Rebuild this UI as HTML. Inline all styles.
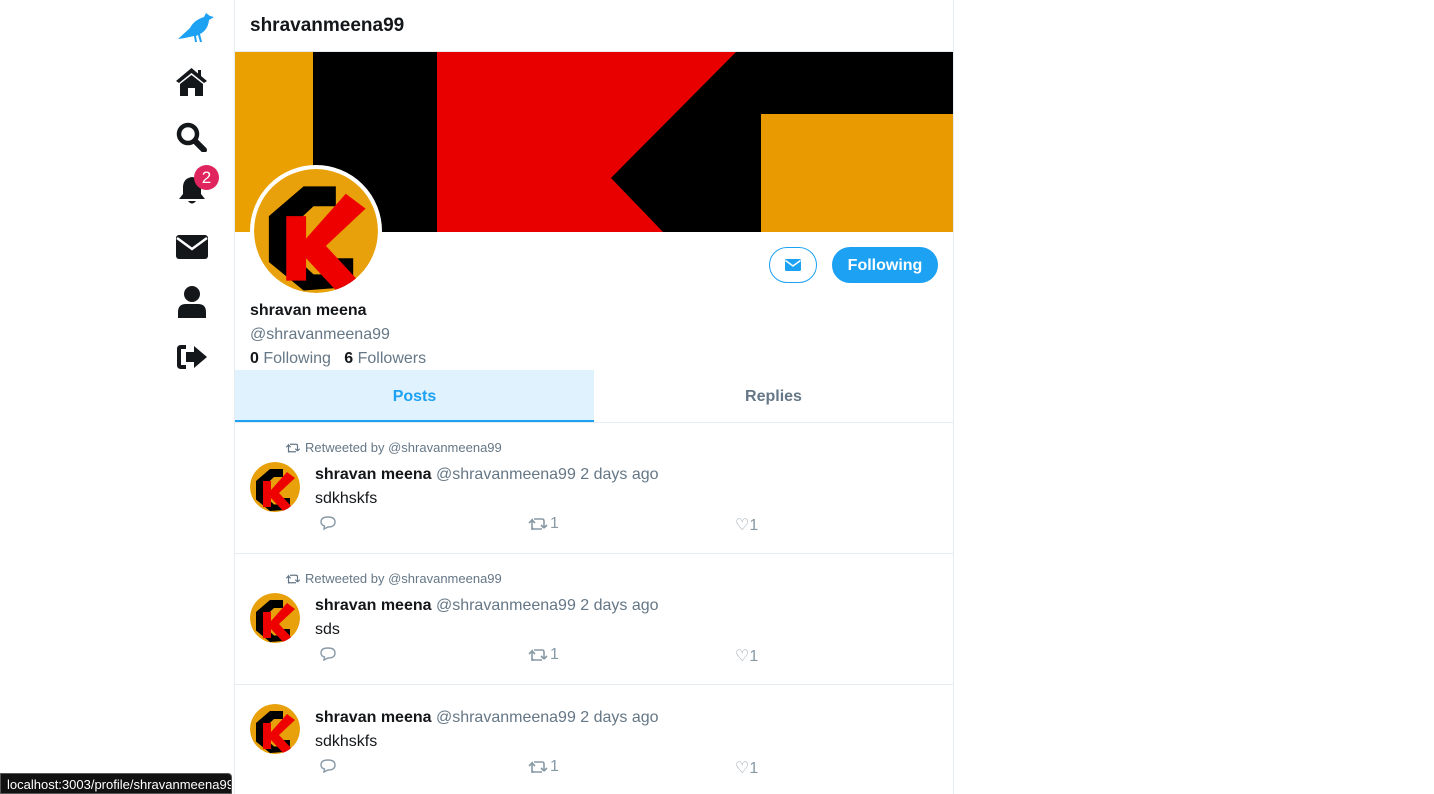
<!DOCTYPE html>
<html><head><meta charset="utf-8"><style>
*{box-sizing:border-box;margin:0;padding:0}
body{width:1434px;height:794px;overflow:hidden;background:#fff;font-family:"Liberation Sans",Arial,sans-serif;color:#14171a;position:relative}
.nav{position:absolute;left:160px;top:0;width:75px;height:794px}
.nav svg{position:absolute;left:16px}
.main{position:absolute;left:234px;top:0;width:720px;height:794px;border-left:1px solid #e6ecf0;border-right:1px solid #e6ecf0}
.hdr{height:52px;padding:15px 15px;font-weight:bold;font-size:19px;border-bottom:1px solid #e6ecf0}
.banner{position:absolute;left:0;top:52px;width:718px;height:180px}
.av{position:absolute;left:15px;top:165px;width:132px;height:132px;border-radius:50%;border:4px solid #fff;overflow:hidden;background:#fff}
.btn{position:absolute;top:247px;height:36px;border-radius:18px;border:1px solid #1da1f2}
.name{position:absolute;left:15px;top:302px;font-weight:bold;font-size:16px}
.handle{position:absolute;left:15px;top:326px;font-size:16px;color:#657786}
.fol{position:absolute;left:15px;top:350px;font-size:16px;color:#657786}
.fol b{color:#14171a}
.tabs{position:absolute;left:0;top:370px;width:718px;height:53px;border-bottom:1px solid #e6ecf0;display:flex}
.tab{flex:1;text-align:center;font-weight:bold;font-size:16px;line-height:53px;color:#657786}
.tab.on{background:#e0f2fd;color:#1da1f2;border-bottom:2px solid #1da1f2}
.post{position:absolute;left:0;width:718px;border-bottom:1px solid #e6ecf0}
.rt{position:absolute;left:50px;font-size:13px;color:#657786}
.pav{position:absolute;left:15px;width:50px;height:50px;border-radius:50%;overflow:hidden}
.pl{position:absolute;left:80px;font-size:16px;color:#657786;white-space:nowrap}
.pl b{color:#14171a}
.pt{position:absolute;left:80px;font-size:16px}
.act{position:absolute;font-size:16px;color:#8899a6;display:flex;align-items:center;gap:2px}
.status{position:absolute;left:0;top:773px;background:#111;color:#fff;font-size:13px;padding:3px 6px;height:21px;width:232px;border:1px solid #555;border-radius:0 4px 0 0;white-space:nowrap;overflow:hidden}
</style></head><body>
<svg width="0" height="0" style="position:absolute"><defs>
<symbol id="logo" viewBox="0 0 100 100"><circle cx="50" cy="50" r="50" fill="#e8a10a"/><polygon points="12,38 40,14 66,14 66,30 48,30 32,45 32,70 48,85 62,85 62,72 80,72 80,95 40,98 12,75" fill="#000"/><polygon points="26,38 42,38 42,56 74,20 90,32 58,62 84,90 68,100 42,72 42,90 26,90" fill="#e00"/></symbol>
<symbol id="rt" viewBox="0 0 20 16"><path d="M4 14 L4 4 L1 7 M4 4 L7 7 M4 4 L4 3 M6 3 L14 3 Q16 3 16 5 L16 12 M16 12 L13 9 M16 12 L19 9 M14 13 L6 13 Q4 13 4 11" stroke="currentColor" stroke-width="1.6" fill="none"/></symbol>
</defs></svg>
<div class="nav">
<svg style="top:12px" width="40" height="30" viewBox="0 0 40 30"><path d="M2 27 L14 16 Q18 8 28 5 L30 1 L34 4 L38 5 L33 8 Q32 18 24 22 L26 30 L24 30 L22 23 L20 24 L21 30 L19 30 L18 24 Q10 26 2 27Z" fill="#1da1f2"/></svg>
<svg style="top:67px;left:15px" width="33" height="29" viewBox="0 0 33 29"><path d="M16.5 1 L1 14 L4 16 L16.5 6 L29 16 L32 14 L26 9 L26 3 L23 3 L23 6.5Z M5 17 L16.5 8 L28 17 L28 29 L20 29 L20 21 L13 21 L13 29 L5 29Z" fill="#14171a"/></svg>
<svg style="top:122px" width="32" height="30" viewBox="0 0 32 30"><circle cx="12" cy="12" r="9" fill="none" stroke="#14171a" stroke-width="4.5"/><path d="M19 19 L28 28" stroke="#14171a" stroke-width="6" stroke-linecap="round"/></svg>
<svg style="top:176px;left:18px" width="28" height="30" viewBox="0 0 28 30"><path d="M14 1 Q6 2 5 10 L5 18 L1 23 L27 23 L23 18 L23 10 Q22 2 14 1Z M10 25 Q14 30 18 25Z" fill="#14171a"/></svg>
<div style="position:absolute;left:34px;top:165px;width:25px;height:25px;border-radius:50%;background:#e0245e;color:#fff;font-size:17px;text-align:center;line-height:25px">2</div>
<svg style="top:235px" width="32" height="24" viewBox="0 0 32 24"><rect x="0" y="0" width="32" height="24" rx="3" fill="#14171a"/><path d="M1 3 L16 14 L31 3" stroke="#fff" stroke-width="2.5" fill="none"/></svg>
<svg style="top:286px;left:18px" width="28" height="32" viewBox="0 0 28 32"><circle cx="14" cy="8" r="8" fill="#14171a"/><path d="M0 32 L0 26 Q0 18 8 18 L20 18 Q28 18 28 26 L28 32Z" fill="#14171a"/></svg>
<svg style="top:344px" width="32" height="26" viewBox="0 0 32 26"><path d="M10 3 L5 3 Q3 3 3 5 L3 21 Q3 23 5 23 L10 23" stroke="#14171a" stroke-width="4" fill="none"/><path d="M10 8 L18 8 L18 2 L31 13 L18 24 L18 18 L10 18Z" fill="#14171a"/></svg>
</div>
<div class="main">
<div class="hdr">shravanmeena99</div>
<svg class="banner" viewBox="0 0 718 180" preserveAspectRatio="none"><rect width="718" height="180" fill="#000"/><rect width="78" height="180" fill="#e9a000"/><polygon points="202,0 501,0 376,126 428,180 202,180" fill="#e80000"/><rect x="526" y="62" width="192" height="118" fill="#e89a00"/></svg>
<div class="av"><svg width="124" height="124"><use href="#logo"/></svg></div>
<div class="btn" style="left:534px;width:48px;background:#fff"><svg style="position:absolute;left:15px;top:11px" width="16" height="12" viewBox="0 0 16 12"><rect width="16" height="12" rx="1.5" fill="#1da1f2"/><path d="M0.5 1.5 L8 7 L15.5 1.5" stroke="#fff" stroke-width="1.5" fill="none"/></svg></div>
<div class="btn" style="left:597px;width:106px;background:#1da1f2;color:#fff;font-weight:bold;font-size:16px;text-align:center;line-height:35px">Following</div>
<div class="name">shravan meena</div>
<div class="handle">@shravanmeena99</div>
<div class="fol"><b>0</b> Following &nbsp;&nbsp;<b>6</b> Followers</div>
<div class="tabs"><div class="tab on">Posts</div><div class="tab">Replies</div></div>

<div class="post" style="top:423px;height:131px">
<div class="rt" style="top:17px;display:flex;align-items:center;gap:4px"><svg width="16" height="12" style="color:#657786"><use href="#rt"/></svg>Retweeted by @shravanmeena99</div>
<div class="pav" style="top:39px"><svg width="50" height="50"><use href="#logo"/></svg></div>
<div class="pl" style="top:43px"><b>shravan meena</b> @shravanmeena99 2 days ago</div>
<div class="pt" style="top:67px">sdkhskfs</div>
<div class="act" style="left:84px;top:92px"><svg width="18" height="16" viewBox="0 0 18 16"><path d="M9 2 Q16 2 16 7 Q16 12 9 12 L5 14 L5.5 11 Q2 10 2 7 Q2 2 9 2Z" stroke="#8899a6" stroke-width="1.4" fill="none"/></svg></div>
<div class="act" style="left:293px;top:92px"><svg width="20" height="16" style="color:#8899a6"><use href="#rt"/></svg>1</div>
<div class="act" style="left:500px;top:92px">♡1</div>
</div>
<div class="post" style="top:554px;height:131px">
<div class="rt" style="top:17px;display:flex;align-items:center;gap:4px"><svg width="16" height="12" style="color:#657786"><use href="#rt"/></svg>Retweeted by @shravanmeena99</div>
<div class="pav" style="top:39px"><svg width="50" height="50"><use href="#logo"/></svg></div>
<div class="pl" style="top:43px"><b>shravan meena</b> @shravanmeena99 2 days ago</div>
<div class="pt" style="top:67px">sds</div>
<div class="act" style="left:84px;top:92px"><svg width="18" height="16" viewBox="0 0 18 16"><path d="M9 2 Q16 2 16 7 Q16 12 9 12 L5 14 L5.5 11 Q2 10 2 7 Q2 2 9 2Z" stroke="#8899a6" stroke-width="1.4" fill="none"/></svg></div>
<div class="act" style="left:293px;top:92px"><svg width="20" height="16" style="color:#8899a6"><use href="#rt"/></svg>1</div>
<div class="act" style="left:500px;top:92px">♡1</div>
</div>
<div class="post" style="top:685px;height:109px;border-bottom:none">
<div class="pav" style="top:19px"><svg width="50" height="50"><use href="#logo"/></svg></div>
<div class="pl" style="top:24px"><b>shravan meena</b> @shravanmeena99 2 days ago</div>
<div class="pt" style="top:48px">sdkhskfs</div>
<div class="act" style="left:84px;top:73px"><svg width="18" height="16" viewBox="0 0 18 16"><path d="M9 2 Q16 2 16 7 Q16 12 9 12 L5 14 L5.5 11 Q2 10 2 7 Q2 2 9 2Z" stroke="#8899a6" stroke-width="1.4" fill="none"/></svg></div>
<div class="act" style="left:293px;top:73px"><svg width="20" height="16" style="color:#8899a6"><use href="#rt"/></svg>1</div>
<div class="act" style="left:500px;top:73px">♡1</div>
</div>
</div>
<div class="status">localhost:3003/profile/shravanmeena99</div>
</body></html>
